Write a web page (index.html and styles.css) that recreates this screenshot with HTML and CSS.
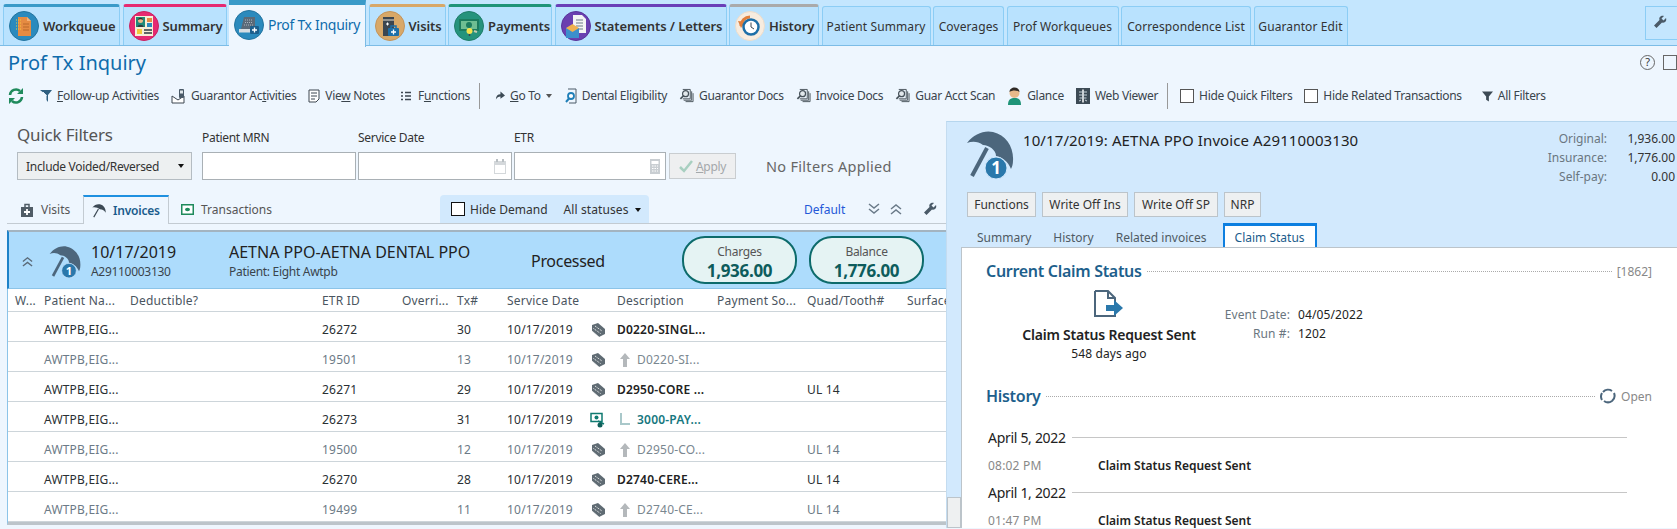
FILE: index.html
```html
<!DOCTYPE html>
<html lang="en">
  <head>
    <meta charset="UTF-8" />
    <title>Prof Tx Inquiry</title>
    <link rel="stylesheet" href="styles.css">
  </head>

  <body>
    <svg class="defs" width="0" height="0">
      <symbol id="umbrella" viewBox="0 0 48 48">
        <path d="M1 12C8 3 18-1 27 1c13 3 21 15 20 29 0 3-1 6-2 8-3-8-9-12-15-13 0-6-7-11-13-11C12 10 6 10 1 12z" fill="#4c667c"/>
        <path d="M21 17 6 45" stroke="#4c667c" stroke-width="4" fill="none"/>
        <circle cx="30" cy="37" r="11" fill="#2a78ab" stroke="#d2e9fd" stroke-width="1"/>
      </symbol>
      <symbol id="stack" viewBox="0 0 16 16">
        <path d="M2 3 8 1l7 6v5l-6 3-7-6z" fill="#5f6b73"/>
        <path d="M5 4l7 5M3.500 6.500l7 5" stroke="#fff" stroke-dasharray="1 1" fill="none"/>
        <path d="M2 9l7 6" stroke="#fff" stroke-width=".6"/>
      </symbol>
      <symbol id="money" viewBox="0 0 16 16">
        <rect x="1" y="1.500" width="11" height="8" fill="#fff" stroke="#0f7a70" stroke-width="1.500"/>
        <ellipse cx="6.500" cy="5.500" rx="2" ry="2" fill="#0f7a70"/>
        <path d="M8 9l6 3" stroke="#0f7a70" stroke-width="1.500"/>
        <circle cx="10" cy="13" r="2.500" fill="#0f5f5a"/>
      </symbol>
      <symbol id="scan" viewBox="0 0 16 16">
        <path d="M4 1h8v10H4" stroke="#47525a" fill="none"/>
        <path d="M13.500 3v9.500H5M15 5v9H7" stroke="#47525a" fill="none"/>
        <circle cx="7" cy="5.500" r="3.200" stroke="#47525a" stroke-width="1.300" fill="#e2e8ec"/>
        <path d="M4.500 8 1.500 11" stroke="#47525a" stroke-width="1.800"/>
      </symbol>
      <symbol id="funnel" viewBox="0 0 12 12">
        <path d="M0 1h12L7.500 6.500V12l-3-2V6.500z" fill="#3c4a55"/>
      </symbol>
      <symbol id="wrench" viewBox="0 0 14 14">
        <path d="M13 3 10.500 5.500 8.500 3.500 11 1C8.500 0 5.500 2 6.500 5L1 10.500 3.500 13 9 7.500c3 1 5-2 4-4.500z" fill="#4a5a68"/>
      </symbol>
    </svg>

    <header class="tabbar">
      <a class="tab tab-blue">
        <svg class="tab-icon" viewBox="0 0 30 30"><circle cx="15" cy="15" r="14.500" fill="#2b8abd" stroke="#24749f"/><path d="M9 6h9l4 4v15H9z" fill="#e58b42"/><path d="M18 6l4 4h-4z" fill="#f3b27a"/><path d="M7 9h5M7 12h5M7 15h5M7 18h5" stroke="#f2c93c" stroke-dasharray="1 1"/><path d="M14 13h6M14 16h6M14 19h6" stroke="#b9682a"/></svg>
        Workqueue
      </a>
      <a class="tab tab-pink">
        <svg class="tab-icon" viewBox="0 0 30 30"><circle cx="15" cy="15" r="14.500" fill="#e62a72" stroke="#c9205f"/><rect x="6" y="5" width="18" height="20" fill="#f6efd8"/><rect x="7" y="6" width="9" height="10" fill="#1f8a78"/><circle cx="11.500" cy="9.500" r="2.500" fill="#e8b98a"/><path d="M8.500 16c0-3 6-3 6 0z" fill="#2f3a40"/><path d="M9 9c0-3 5-3 5 0-1.500-1-3.500-1-5 0z" fill="#2f2a26"/><rect x="18" y="7" width="5" height="4" fill="#e58b42"/><rect x="18" y="12" width="5" height="4" fill="#2b8abd"/><rect x="8" y="18" width="5" height="5" fill="#f2c93c"/><path d="M15 19h8M15 22h8" stroke="#2f3a40" stroke-width="1.500"/></svg>
        Summary
      </a>
      <a class="tab tab-active">
        <svg class="tab-icon" viewBox="0 0 30 30"><circle cx="15" cy="15" r="14.500" fill="#2b8abd" stroke="#24749f"/><path d="M10 7h11v12H7z" fill="#5b6a78"/><path d="M11 10h8M11 12.500h8M10 15h9" stroke="#aab5bf" stroke-dasharray="1 1"/><rect x="5" y="19" width="14" height="3.500" fill="#d6dde2"/><rect x="16" y="16" width="9" height="8" rx="1" fill="#1d5f8c"/><path d="M20.500 17.500v5M18 20h5" stroke="#fff" stroke-width="1.300"/></svg>
        Prof Tx Inquiry
      </a>
      <a class="tab tab-tan">
        <svg class="tab-icon" viewBox="0 0 30 30"><circle cx="15" cy="15" r="14.500" fill="#d8a868" stroke="#c4935a"/><rect x="8" y="6" width="11" height="19" fill="#3c4650"/><path d="M8 9h11" stroke="#e8e0d0"/><path d="M11 13h3M12.500 11.500v3" stroke="#fff"/><rect x="13" y="17" width="11" height="8" rx="1" fill="#1d6fa8"/><path d="M16 17v-2h5v2" stroke="#1d6fa8" stroke-width="1.500" fill="none"/><path d="M18.500 18.500v5M16 21h5" stroke="#fff" stroke-width="1.300"/></svg>
        Visits
      </a>
      <a class="tab tab-green">
        <svg class="tab-icon" viewBox="0 0 30 30"><circle cx="15" cy="15" r="14.500" fill="#25937c" stroke="#1f7d6a"/><rect x="5" y="8" width="20" height="12" fill="#1c7c5e"/><rect x="7" y="10" width="16" height="8" fill="#6fbe92"/><circle cx="15" cy="14" r="3" fill="#1c7c5e"/><circle cx="15.500" cy="20" r="3" fill="#f2e24c"/><path d="M15.500 23v2" stroke="#3c4650" stroke-width="1.500"/><path d="M20 20l3 1" stroke="#c8cdb0" stroke-width="2"/></svg>
        Payments
      </a>
      <a class="tab tab-purple">
        <svg class="tab-icon" viewBox="0 0 30 30"><circle cx="15" cy="15" r="14.500" fill="#6a3fb0" stroke="#59349a"/><path d="M12 4h9l4 4v14H12z" fill="#f4f4f4"/><path d="M15 9h7M15 12h7M15 15h7M15 18h7" stroke="#6a7a86"/><path d="M5 17h13v10H5z" fill="#3c8fcc"/><path d="M5 17l6.500-4 6.500 4-6.500 4z" fill="#f0b050"/></svg>
        Statements / Letters
      </a>
      <a class="tab tab-gray">
        <svg class="tab-icon" viewBox="0 0 30 30"><circle cx="15" cy="15" r="14.500" fill="#f7ecdf" stroke="#ecdccb"/><path d="M6 15a9 9 0 0 1 9-9" stroke="#e07f3c" stroke-width="3" fill="none"/><path d="M3 10l7 1-4 6z" fill="#e07f3c"/><circle cx="16" cy="16" r="7.500" fill="#fff" stroke="#1d6fa8" stroke-width="2.500"/><path d="M16 11.500V16l3 2" stroke="#3c4650" fill="none"/></svg>
        History
      </a>
      <a class="tab tab-plain">Patient Summary</a>
      <a class="tab tab-plain">Coverages</a>
      <a class="tab tab-plain">Prof Workqueues</a>
      <a class="tab tab-plain">Correspondence List</a>
      <a class="tab tab-plain">Guarantor Edit</a>
      <button class="bar-tool"><svg width="14" height="18"><use href="#wrench" width="14" height="14" y="2"/></svg></button>
    </header>

    <div class="titlebar">
      <h1>Prof Tx Inquiry</h1>
      <div class="title-tools">
        <span class="help">?</span>
        <span class="winbox"></span>
      </div>
    </div>

    <nav class="toolbar">
      <svg class="refresh" width="16" height="18" viewBox="0 0 16 18"><path d="M2 8a6 6 0 0 1 10-4M14 10a6 6 0 0 1-10 4" stroke="#1f8a5c" stroke-width="2.500" fill="none"/><path d="M15 1v6H9zM1 17v-6h6z" fill="#1f8a5c"/></svg>
      <a class="tool t-follow"><svg width="12" height="14" viewBox="0 0 12 14"><path d="M0 1h12L8 6v7L6.500 11V6z" fill="#2f5f80"/><path d="M3 3l3.500 4" stroke="#eef6fe"/></svg><span><u>F</u>ollow-up Activities</span></a>
      <a class="tool"><svg width="15" height="16" viewBox="0 0 15 16"><path d="M1 8v7h12V8l-6 4-6-4z" stroke="#3c4650" fill="#fff"/><rect x="8" y="1" width="5" height="9" rx="1" fill="#4a5a68"/><rect x="9" y="2.500" width="3" height="3" fill="#dfe6ea"/></svg><span>Guarantor Ac<u>t</u>ivities</span></a>
      <a class="tool"><svg width="12" height="14" viewBox="0 0 12 14"><path d="M1 1h10v9l-3 3H1z" stroke="#3c4650" fill="#fff"/><path d="M3 4h6M3 7h6M3 10h4" stroke="#3c4650"/></svg><span>Vie<u>w</u> Notes</span></a>
      <a class="tool t-func"><svg width="10" height="10" viewBox="0 0 10 10"><path d="M0 1.500h2M4 1.500h6M0 5h2M4 5h6M0 8.500h2M4 8.500h6" stroke="#3c4650" stroke-width="1.500"/></svg><span>F<u>u</u>nctions</span></a>
      <span class="tool-sep"></span>
      <a class="tool t-goto"><svg width="10" height="11" viewBox="0 0 11 11"><path d="M1 10c0-4 2-6 5-6V1l5 4.500L6 9V6.500c-2 0-4 1-5 3.500z" fill="#3c4a55"/></svg><span><u>G</u>o To</span><i class="caret"></i></a>
      <a class="tool t-dental"><svg width="12" height="16" viewBox="0 0 12 16"><path d="M3 1h8v14H4" stroke="#4a5a68" fill="none"/><circle cx="6" cy="8" r="3" stroke="#1f7fb8" stroke-width="1.800" fill="#fff"/><path d="M4 10.500 1 14" stroke="#1f7fb8" stroke-width="2"/></svg><span>Dental Eligibility</span></a>
      <a class="tool"><svg width="15" height="16"><use href="#scan" width="15" height="16"/></svg><span>Guarantor Docs</span></a>
      <a class="tool"><svg width="15" height="16"><use href="#scan" width="15" height="16"/></svg><span>Invoice Docs</span></a>
      <a class="tool"><svg width="15" height="16"><use href="#scan" width="15" height="16"/></svg><span>Guar Acct Scan</span></a>
      <a class="tool"><svg width="15" height="18" viewBox="0 0 15 18"><path d="M1 18c0-6 3-7 6.500-7s6.500 1 6.500 7z" fill="#1f9478"/><circle cx="7.500" cy="6" r="5" fill="#e8b98a"/><path d="M2.500 5c0-6 10-6 10 0-3-2-7-2-10 0z" fill="#2f2a26"/></svg><span>Glance</span></a>
      <a class="tool"><svg width="14" height="16" viewBox="0 0 14 16"><rect width="14" height="16" fill="#3c4a55"/><path d="M7 1.500v13" stroke="#fff" stroke-width="1.500"/><path d="M3 4h8M3 7h8M3.500 10h7" stroke="#c6d2da"/><path d="M3 13l2-1M11 13l-2-1" stroke="#c6d2da"/></svg><span>Web Viewer</span></a>
      <span class="tool-sep"></span>
      <label class="tool"><span class="box"></span><span>Hide Quick Filters</span></label>
      <label class="tool"><span class="box"></span><span>Hide Related Transactions</span></label>
      <a class="tool t-all"><svg width="11" height="12"><use href="#funnel" width="11" height="12"/></svg><span>All Filters</span></a>
    </nav>

    <main class="main">
      <section class="left">
        <div class="filters">
          <div class="filter-head">Quick Filters</div>
          <div class="filter-label">Patient MRN</div>
          <div class="filter-label">Service Date</div>
          <div class="filter-label">ETR</div>
          <div></div>
          <div></div>
          <div class="select"><span>Include Voided/Reversed</span><i class="caret dark"></i></div>
          <div class="field"></div>
          <div class="field">
            <svg width="12" height="15" viewBox="0 0 12 15"><path d="M0 2h12v13H0z" fill="#d4d8db"/><path d="M1 6h10v8H1z" fill="#fff"/><path d="M3 0v3M9 0v3" stroke="#b8bec2" stroke-width="2"/></svg>
          </div>
          <div class="field etr">
            <svg width="10" height="15" viewBox="0 0 10 15"><rect width="10" height="15" fill="#c9ced2"/><rect x="1.500" y="2" width="7" height="3" fill="#fff"/><path d="M2 7h1.500M4.500 7H6M7 7h1M2 9.500h1.500M4.500 9.500H6M7 9.500h1M2 12h1.500M4.500 12H6M7 12h1" stroke="#fff"/></svg>
          </div>
          <button class="apply"><svg width="14" height="13" viewBox="0 0 14 13"><path d="M1 7l4 4 8-10" stroke="#a8cfc0" stroke-width="2.500" fill="none"/></svg><span><u>A</u>pply</span></button>
          <div class="no-filters">No Filters Applied</div>
        </div>

        <div class="subtabs">
          <a class="subtab st-visits">
            <svg width="14" height="14" viewBox="0 0 14 14"><path d="M1 4h12v10H1z" fill="#505c66"/><path d="M5 4V1.500h4V4" stroke="#505c66" stroke-width="1.500" fill="none"/><path d="M7 6v6M4 9h6" stroke="#fff" stroke-width="1.800"/></svg>
            Visits
          </a>
          <a class="subtab st-invoices">
            <svg width="14" height="16" viewBox="0 0 48 48"><path d="M1 12C8 3 18-1 27 1c13 3 21 15 20 29-6-9-12-12-20-12C20 13 10 9 1 12z" fill="#3c4a55"/><path d="M22 17 6 45" stroke="#3c4a55" stroke-width="4"/></svg>
            Invoices
          </a>
          <a class="subtab st-trans">
            <svg width="13" height="11" viewBox="0 0 13 11"><rect x=".75" y=".75" width="11.500" height="9.500" fill="#fff" stroke="#1f8a5c" stroke-width="1.500"/><ellipse cx="6.500" cy="5.500" rx="2.500" ry="1.800" fill="#1f8a5c"/></svg>
            Transactions
          </a>
          <div class="demand">
            <span class="box black"></span>
            <span>Hide Demand</span>
            <span class="statuses">All statuses <i class="caret dark"></i></span>
          </div>
          <div class="grid-tools">
            <a class="default">Default</a>
            <svg class="expand" width="12" height="12" viewBox="0 0 12 12"><path d="M1 1l5 4 5-4M1 6l5 4 5-4" stroke="#6a7a88" stroke-width="1.500" fill="none"/></svg>
            <svg class="shrink" width="12" height="12" viewBox="0 0 12 12"><path d="M1 6l5-4 5 4M1 11l5-4 5 4" stroke="#6a7a88" stroke-width="1.500" fill="none"/></svg>
            <svg class="spanner" width="14" height="14"><use href="#wrench" width="14" height="14"/></svg>
          </div>
        </div>

        <div class="card">
          <svg class="collapse" width="11" height="11" viewBox="0 0 12 12"><path d="M1 6l5-4 5 4M1 11l5-4 5 4" stroke="#5a6a78" stroke-width="1.500" fill="none"/></svg>
          <svg class="card-icon" width="32" height="32" viewBox="0 0 48 48"><use href="#umbrella" width="48" height="48"/><text class="badge" x="30" y="43">1</text></svg>
          <div class="card-date">
            <div class="big">10/17/2019</div>
            <div class="small">A29110003130</div>
          </div>
          <div class="card-payer">
            <div class="big">AETNA PPO-AETNA DENTAL PPO</div>
            <div class="small">Patient: Eight Awtpb</div>
          </div>
          <div class="card-status">Processed</div>
          <div class="pill"><span>Charges</span><b>1,936.00</b></div>
          <div class="pill"><span>Balance</span><b>1,776.00</b></div>
        </div>

        <div class="table">
          <div class="row head">
            <span>W...</span><span>Patient Na...</span><span>Deductible?</span><span>ETR ID</span><span>Overri...</span><span>Tx#</span><span>Service Date</span><span></span><span>Description</span><span>Payment So...</span><span>Quad/Tooth#</span><span>Surface</span>
          </div>
          <div class="row">
            <span></span><span>AWTPB,EIG...</span><span></span><span>26272</span><span></span><span>30</span><span>10/17/2019</span>
            <svg width="16" height="16"><use href="#stack" width="16" height="16"/></svg>
            <span class="desc">D0220-SINGL...</span><span></span><span></span><span></span>
          </div>
          <div class="row muted">
            <span></span><span>AWTPB,EIG...</span><span></span><span>19501</span><span></span><span>13</span><span>10/17/2019</span>
            <svg width="16" height="16"><use href="#stack" width="16" height="16"/></svg>
            <span class="child"><svg width="10" height="14" viewBox="0 0 10 14"><path d="M5 0l5 6H7v8H3V6H0z" fill="#b4b8bb"/></svg>D0220-SI...</span><span></span><span></span><span></span>
          </div>
          <div class="row">
            <span></span><span>AWTPB,EIG...</span><span></span><span>26271</span><span></span><span>29</span><span>10/17/2019</span>
            <svg width="16" height="16"><use href="#stack" width="16" height="16"/></svg>
            <span class="desc">D2950-CORE ...</span><span></span><span>UL 14</span><span></span>
          </div>
          <div class="row">
            <span></span><span>AWTPB,EIG...</span><span></span><span>26273</span><span></span><span>31</span><span>10/17/2019</span>
            <svg width="16" height="16"><use href="#money" width="16" height="16"/></svg>
            <span class="child pay"><svg width="10" height="14" viewBox="0 0 10 14"><path d="M1 0v11h9" stroke="#a9c8ca" stroke-width="2" fill="none"/></svg>3000-PAY...</span><span></span><span></span><span></span>
          </div>
          <div class="row muted">
            <span></span><span>AWTPB,EIG...</span><span></span><span>19500</span><span></span><span>12</span><span>10/17/2019</span>
            <svg width="16" height="16"><use href="#stack" width="16" height="16"/></svg>
            <span class="child"><svg width="10" height="14" viewBox="0 0 10 14"><path d="M5 0l5 6H7v8H3V6H0z" fill="#b4b8bb"/></svg>D2950-CO...</span><span></span><span>UL 14</span><span></span>
          </div>
          <div class="row">
            <span></span><span>AWTPB,EIG...</span><span></span><span>26270</span><span></span><span>28</span><span>10/17/2019</span>
            <svg width="16" height="16"><use href="#stack" width="16" height="16"/></svg>
            <span class="desc">D2740-CERE...</span><span></span><span>UL 14</span><span></span>
          </div>
          <div class="row muted">
            <span></span><span>AWTPB,EIG...</span><span></span><span>19499</span><span></span><span>11</span><span>10/17/2019</span>
            <svg width="16" height="16"><use href="#stack" width="16" height="16"/></svg>
            <span class="child"><svg width="10" height="14" viewBox="0 0 10 14"><path d="M5 0l5 6H7v8H3V6H0z" fill="#b4b8bb"/></svg>D2740-CE...</span><span></span><span>UL 14</span><span></span>
          </div>
        </div>
      </section>

      <aside class="right">
        <div class="inv-head">
          <svg class="inv-icon" width="48" height="48" viewBox="0 0 48 48"><use href="#umbrella" width="48" height="48"/><text class="badge" x="30" y="43">1</text></svg>
          <div class="inv-title">10/17/2019: AETNA PPO Invoice A29110003130</div>
          <dl class="amounts">
            <dt>Original:</dt><dd>1,936.00</dd>
            <dt>Insurance:</dt><dd>1,776.00</dd>
            <dt>Self-pay:</dt><dd>0.00</dd>
          </dl>
        </div>
        <div class="inv-buttons">
          <button>Functions</button>
          <button>Write Off Ins</button>
          <button>Write Off SP</button>
          <button>NRP</button>
        </div>
        <div class="inv-tabs">
          <a>Summary</a>
          <a>History</a>
          <a>Related invoices</a>
          <a class="on">Claim Status</a>
        </div>
        <div class="inv-body">
          <div class="strip"><div class="thumb"></div></div>
          <div class="content">
            <div class="section-head">
              <h2>Current Claim Status</h2>
              <span class="dots"></span>
              <span class="note">[1862]</span>
            </div>
            <div class="status">
              <div class="status-main">
                <svg width="30" height="27" viewBox="0 0 30 27"><path d="M1 1h13l7 7v4M21 24v2H1V1M14 1v7h7" stroke="#4c667c" stroke-width="2" fill="none"/><path d="M12 15h8v-5l9 8-9 8v-5h-8z" fill="#2a78ab"/></svg>
                <div class="status-name">Claim Status Request Sent</div>
                <div>548 days ago</div>
              </div>
              <dl class="status-info">
                <dt>Event Date:</dt><dd>04/05/2022</dd>
                <dt>Run #:</dt><dd>1202</dd>
              </dl>
            </div>
            <div class="section-head history">
              <h2>History</h2>
              <span class="dots"></span>
              <svg width="16" height="16" viewBox="0 0 16 16"><path d="M3 4a7 7 0 0 1 9-1M14 5a7 7 0 0 1-2 8M12 13a7 7 0 0 1-8 0M2 12a7 7 0 0 1 0-7" stroke="#4c667c" stroke-width="2" fill="none"/></svg>
              <span class="note">Open</span>
            </div>
            <div class="day first"><span>April 5, 2022</span><i></i></div>
            <div class="entry"><time>08:02 PM</time><span>Claim Status Request Sent</span></div>
            <div class="day"><span>April 1, 2022</span><i></i></div>
            <div class="entry"><time>01:47 PM</time><span>Claim Status Request Sent</span></div>
          </div>
        </div>
      </aside>
    </main>
  </body>
</html>
```

FILE: styles.css
```css
* {
  margin: 0;
  padding: 0;
  box-sizing: border-box;
}

html,
body {
  height: 529px;
  overflow: hidden;
}

body {
  font-family: "Noto Sans", sans-serif;
  font-size: 12px;
  letter-spacing: -0.3px;
  color: #333;
  background: #eef6fe;
}

.defs {
  position: absolute;
}

.badge {
  font-family: "Noto Sans", sans-serif;
  font-size: 17px;
  font-weight: 700;
  letter-spacing: 0;
  text-anchor: middle;
  fill: #fff;
}

.caret {
  display: inline-block;
  width: 0;
  height: 0;
  margin-left: 3px;
  vertical-align: 2px;
  border: 3px solid transparent;
  border-top: 4px solid #555;
  border-bottom: 0;
}

.caret.dark {
  border-top-color: #111;
}

/* top tabs */
.tabbar {
  display: flex;
  align-items: flex-end;
  height: 46px;
  padding-left: 3px;
  background: #c4e6fe;
  border-bottom: 1px solid #7cbce6;
}

.tab {
  display: flex;
  flex: none;
  align-items: center;
  gap: 4px;
  height: 41px;
  padding-left: 5px;
  margin-right: 2.5px;
  font-size: 13px;
  font-weight: 600;
  letter-spacing: -0.1px;
  white-space: nowrap;
  background: #b9e2fe;
  border: 1px solid #8ccdf5;
  border-top: 3px solid #3a9ac8;
  border-bottom: 0;
  border-radius: 3px 3px 0 0;
}

.tab:nth-child(1) { width: 117px; }
.tab:nth-child(2) { width: 104px; }
.tab:nth-child(3) { width: 137px; }
.tab:nth-child(4) { width: 77px; }
.tab:nth-child(5) { width: 104px; }
.tab:nth-child(6) { width: 172px; }
.tab:nth-child(7) { width: 90px; }
.tab:nth-child(8) { width: 109px; }
.tab:nth-child(9) { width: 71px; }
.tab:nth-child(10) { width: 112px; }
.tab:nth-child(11) { width: 130px; }
.tab:nth-child(12) { width: 94px; }

.tab-icon {
  flex: none;
  width: 30px;
  height: 30px;
}

.tab-pink { border-top-color: #e62a72; }
.tab-tan { border-top-color: #d8a868; }
.tab-green { border-top-color: #1f9478; }
.tab-purple { border-top-color: #6a3fb8; }
.tab-gray { border-top-color: #aaa; }

.tab-active {
  align-self: flex-start;
  height: 47px;
  padding-bottom: 3px;
  font-weight: 400;
  font-size: 14px;
  letter-spacing: -0.3px;
  color: #0f6cac;
  background: #eef6fe;
  border-top: 5px solid #3a9ac8;
  border-left: 0;
  border-right: 1px solid #7cbce6;
  border-radius: 0;
  z-index: 1;
}

.tab-plain {
  justify-content: center;
  padding: 0;
  font-size: 12px;
  font-weight: 400;
  letter-spacing: 0.1px;
  border-top: 1px solid #8ccdf5;
  height: 39px;
}

.bar-tool {
  align-self: flex-start;
  width: 32px;
  height: 34px;
  margin: 6px 0 0 auto;
  padding-right: 4px;
  background: #c4e6fe;
  border: 1px solid #8ccdf5;
  border-right: 0;
}

/* title */
.titlebar {
  display: flex;
  justify-content: space-between;
  align-items: center;
  height: 33px;
  padding-left: 8px;
}

h1 {
  font-size: 20px;
  font-weight: 400;
  letter-spacing: 0;
  color: #0f6cac;
}

.title-tools {
  display: flex;
  gap: 8px;
  width: 37px;
  overflow: hidden;
}

.help {
  flex: none;
  width: 15px;
  height: 15px;
  line-height: 12px;
  text-align: center;
  font-size: 11px;
  border: 1.500px solid #666;
  border-radius: 50%;
}

.winbox {
  flex: none;
  width: 14px;
  height: 15px;
  border: 1.500px solid #666;
}

/* toolbar */
.toolbar {
  display: flex;
  align-items: center;
  height: 32px;
  margin-bottom: 10px;
  padding: 1px 0 0 8px;
  white-space: nowrap;
}

.tool {
  display: flex;
  align-items: center;
  gap: 5px;
  margin-left: 12px;
  color: #3a444c;
}

.tool .caret {
  margin-left: 0;
}

.t-follow { margin-left: 16px; }

.t-func {
  gap: 7px;
  margin-left: 16px;
}

.t-goto { margin-left: 15px; }
.t-dental { margin-left: 13px; }
.t-all { margin-left: 20px; }

.tool-sep {
  width: 1px;
  height: 26px;
  margin-left: 9px;
  background: #999;
}

.box {
  flex: none;
  width: 14px;
  height: 14px;
  background: #fff;
  border: 1px solid #555;
}

/* layout */
.main {
  display: flex;
  height: 407px;
}

.left {
  flex: none;
  width: 946px;
}

.right {
  flex: 1;
  display: flex;
  flex-direction: column;
  min-width: 0;
  background: #d2e9fd;
  border-top: 1px solid #b6d6ee;
  border-left: 1px solid #c4dcf0;
}

/* quick filters */
.filters {
  display: grid;
  grid-template-columns: 185px 156px 156px 155px 97px auto;
  grid-template-rows: 31px 28px;
  align-items: center;
  height: 74px;
  padding-left: 17px;
}

.filter-head {
  margin-bottom: 4px;
  font-size: 17px;
  letter-spacing: -0.2px;
  color: #555;
}

.filter-label {
  padding-top: 1px;
  color: #333;
}

.select {
  display: flex;
  align-items: center;
  justify-content: space-between;
  width: 175px;
  height: 28px;
  padding: 0 7px 0 8px;
  color: #333;
  background: #edf0f1;
  border: 1px solid #b4bcc2;
}

.field {
  display: flex;
  align-items: center;
  justify-content: flex-end;
  width: 154px;
  height: 28px;
  padding-right: 5px;
  background: #fff;
  border: 1px solid #a9b0b5;
}

.field.etr {
  width: 152px;
}

.apply {
  display: flex;
  align-items: center;
  justify-content: center;
  gap: 3px;
  width: 67px;
  height: 26px;
  font: inherit;
  letter-spacing: inherit;
  color: #a4a8ab;
  background: #eeeff0;
  border: 1px solid #c9cdd0;
}

.no-filters {
  font-size: 14.500px;
  letter-spacing: 0.3px;
  color: #666;
}

/* grid tabs */
.subtabs {
  display: flex;
  align-items: stretch;
  height: 29px;
  margin-left: 7px;
  border-bottom: 1px solid #c3cbd2;
}

.subtab {
  display: flex;
  flex: none;
  align-items: center;
  gap: 7px;
  margin-bottom: -1px;
  letter-spacing: 0;
  color: #555;
}

.st-visits {
  width: 76px;
  padding-left: 13px;
}

.st-invoices {
  width: 86px;
  padding-left: 8px;
  color: #1a5c8c;
  font-weight: 600;
  letter-spacing: -0.2px;
  background: #eef6fe;
  border: 1px solid #c3cbd2;
  border-top: 2px solid #1e90e0;
  border-bottom: 0;
}

.st-trans {
  width: 107px;
  padding-left: 12px;
}

.demand {
  display: flex;
  flex: none;
  align-items: center;
  gap: 5px;
  width: 209px;
  margin-left: 164px;
  padding-left: 11px;
  letter-spacing: 0;
  color: #333;
  background: #d2e9fd;
  border-radius: 4px 4px 0 0;
}

.box.black {
  border-color: #111;
}

.statuses {
  margin-left: 11px;
  letter-spacing: 0.1px;
}

.grid-tools {
  display: flex;
  align-items: center;
  margin-left: 155px;
}

.default {
  letter-spacing: 0;
  color: #2458d8;
}

.expand { margin-left: 23px; }
.shrink { margin-left: 10px; }
.spanner { margin-left: 21px; }

/* invoice card */
.card {
  display: flex;
  align-items: center;
  height: 59px;
  margin: 6px 0 0 7px;
  padding-top: 2px;
  background: #addcfc;
  border-top: 2px solid #a3b4c0;
  border-left: 2px solid #1e82c8;
  border-bottom: 1px solid #8cc4e8;
}

.collapse {
  margin-left: 13px;
}

.card-icon {
  margin-left: 16px;
  margin-top: 2px;
}

.card-date {
  width: 138px;
  margin-left: 10px;
}

.card-payer {
  width: 302px;
}

.big {
  font-size: 16px;
  line-height: 22px;
  letter-spacing: 0;
  color: #222;
}

.small {
  line-height: 18px;
  color: #3a444c;
}

.card-status {
  width: 151px;
  font-size: 16px;
  color: #222;
}

.pill {
  display: flex;
  flex: none;
  flex-direction: column;
  align-items: center;
  justify-content: center;
  width: 115px;
  height: 48px;
  margin: 0 12px 2px 0;
  padding-top: 3px;
  color: #555;
  background: #e5f3f3;
  border: 2px solid #0d6b6b;
  border-radius: 23px;
}

.pill span {
  line-height: 17px;
}

.pill b {
  font-size: 17px;
  line-height: 21px;
  color: #0d5c5c;
}

/* table */
.table {
  margin-left: 7px;
  background: #fff;
  border-left: 1px solid #8cc4e8;
  border-bottom: 3px solid #bcc4ca;
}

.row {
  display: grid;
  grid-template-columns: 29px 86px 192px 80px 55px 50px 83px 27px 100px 90px 100px 60px;
  align-items: center;
  height: 30px;
  padding: 6px 0 0 7px;
  overflow: hidden;
  white-space: nowrap;
  letter-spacing: 0.2px;
  color: #2a2f33;
  border-bottom: 1px solid #cdd5da;
}

.row.head {
  height: 23px;
  padding-top: 1px;
  color: #4a5560;
}

.row.muted {
  color: #6c7a86;
}

.desc {
  font-weight: 600;
  color: #222;
}

.child {
  display: flex;
  align-items: center;
  gap: 7px;
  margin-left: 3px;
  color: #7a8790;
}

.child.pay {
  font-weight: 600;
  color: #17787f;
}

/* invoice detail */
.inv-head {
  display: flex;
  height: 70px;
  padding-left: 19px;
}

.inv-icon {
  margin-top: 9px;
}

.inv-title {
  flex: 1;
  margin: 8px 0 0 9px;
  font-size: 15px;
  letter-spacing: 0.1px;
  color: #222;
}

.amounts {
  display: grid;
  grid-template-columns: auto 68px;
  grid-auto-rows: 19px;
  align-items: center;
  margin-top: 7px;
  text-align: right;
  letter-spacing: 0;
  padding-right: 2px;
}

.amounts dt {
  color: #6a7680;
}

.inv-buttons {
  display: flex;
  gap: 6px;
  margin-left: 20px;
}

.inv-buttons button {
  height: 25px;
  font: inherit;
  letter-spacing: 0;
  color: #333;
  background: #eef0f1;
  border: 1px solid #bcc4ca;
}

.inv-buttons button:nth-child(1) { width: 69px; }
.inv-buttons button:nth-child(2) { width: 86px; }
.inv-buttons button:nth-child(3) { width: 84px; }
.inv-buttons button:nth-child(4) { width: 37px; }

.inv-tabs {
  display: flex;
  align-items: flex-end;
  height: 30px;
  margin-left: 30px;
  gap: 22px;
  letter-spacing: 0;
  color: #4f5b64;
}

.inv-tabs a {
  padding-bottom: 1px;
}

.inv-tabs .on {
  display: flex;
  align-items: center;
  justify-content: center;
  width: 94px;
  height: 24px;
  margin-left: -6px;
  padding: 1px 0 0;
  color: #1a5c8c;
  background: #fff;
  border: 2px solid #0d7fe0;
  border-top-width: 3px;
  border-bottom: 0;
}

.inv-body {
  flex: 1;
  display: flex;
  min-height: 0;
}

.strip {
  display: flex;
  flex: none;
  align-items: flex-end;
  width: 14px;
}

.thumb {
  width: 14px;
  height: 31px;
  background: #eef0f1;
  border: 1px solid #bcc4ca;
}

.content {
  flex: 1;
  padding: 13px 25px 0 24px;
  color: #222;
  background: #fff;
  border-top: 1px solid #bcc4ca;
  border-left: 1px solid #bcc4ca;
}

.section-head {
  display: flex;
  align-items: center;
  gap: 5px;
  height: 20px;
}

h2 {
  font-size: 16px;
  font-weight: 600;
  letter-spacing: -0.3px;
  color: #1d5f8c;
}

.dots {
  flex: 1;
  border-top: 1px dotted #aaa;
}

.note {
  letter-spacing: 0;
  color: #888;
}

.status {
  display: flex;
  margin-top: 9px;
  letter-spacing: 0.1px;
}

.status-main {
  display: flex;
  flex-direction: column;
  align-items: center;
  width: 200px;
  margin-left: 23px;
  line-height: 19px;
}

.status-name {
  margin-top: 8px;
  font-size: 14px;
  font-weight: 600;
  letter-spacing: -0.2px;
}

.status-info {
  display: grid;
  grid-template-columns: 66px auto;
  grid-auto-rows: 19px;
  column-gap: 8px;
  margin: 15px 0 0 15px;
  align-items: center;
}

.status-info dt {
  text-align: right;
  white-space: nowrap;
  color: #6a7680;
}

.history {
  margin-top: 23px;
}

.day {
  display: flex;
  align-items: center;
  gap: 6px;
  height: 20px;
  margin: 7px 25px 0 2px;
  font-size: 14px;
  color: #222;
}

.day.first {
  margin-top: 21px;
}

.day i {
  flex: 1;
  border-top: 1px solid #c6c6c6;
}

.entry {
  display: grid;
  grid-template-columns: 110px auto;
  align-items: center;
  height: 20px;
  margin: 8px 0 0 2px;
  font-weight: 600;
  letter-spacing: 0;
}

.entry time {
  font-weight: 400;
  letter-spacing: 0.2px;
  color: #888;
}
```
